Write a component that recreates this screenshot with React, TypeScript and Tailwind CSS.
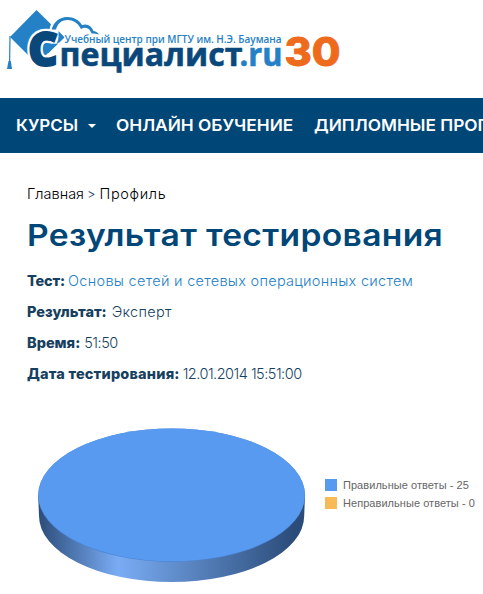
function Logo() {
  return (
    <svg width="350" height="84" viewBox="0 0 350 84" className="block" role="img" aria-label="Специалист.ru">
      <path d="M36.5 10 L10 37 L37 64 L64 37 Z" fill="#2581c6" />
      <path d="M10 36 L9.6 63" stroke="#2581c6" strokeWidth="1.2" fill="none" />
      <path d="M8.5 61 H10.8 L12 69 H7 Z" fill="#2581c6" />
      <path d="M49 32 L50 27 C54 14 73 12 82 23 C89 22 94 28 99 36 L64 37 L60 32 Z" fill="#fff" />
      <path d="M51.5 30.5 C53 22 60 17 67 17 C74 17 79 20 82 25 C88 23 92 27 93.5 31 C96 31.5 98 32.5 99 34.5 C96 33.5 94 33.5 91.5 33.5 C90 28.5 86 26 81 29 C78 23 73 20 67.5 20 C61 20 57.500 24 56 29.500 C54.500 29.200 53 29.500 51.500 30.500 Z" fill="#2581c6" />
      <g fontFamily="'Open Sans', 'Noto Sans', sans-serif" fontWeight="700">
        <text x="28" y="65.5" fontSize="48" fontWeight="800" textLength="30" lengthAdjust="spacingAndGlyphs" fill="#0a487c" stroke="#fff" strokeWidth="6.5" paintOrder="stroke">С</text>
        <path d="M58.500 31 L64.500 37.500 L48 53.500 L43 50 L44 44 L58.500 43.500 Z" fill="#2581c6" />
        <text x="28" y="65.5" fontSize="48" fontWeight="800" textLength="30" lengthAdjust="spacingAndGlyphs" fill="#0a487c" stroke="#0a487c" strokeWidth="1.8">С</text>
        <text x="59.5" y="66" fontSize="33" textLength="183" lengthAdjust="spacingAndGlyphs" fill="#0a487c" stroke="#0a487c" strokeWidth="0.6">пециалист</text>
        <text x="239.5" y="66" fontSize="33" textLength="43" lengthAdjust="spacingAndGlyphs" fill="#2581c6" stroke="#2581c6" strokeWidth="0.6">.ru</text>
        <text x="64.5" y="43" fontSize="11" fontWeight="600" textLength="217" lengthAdjust="spacingAndGlyphs" fill="#2581c6">Учебный центр при МГТУ им. Н.Э. Баумана</text>
      </g>
      <text x="284.5" y="65.5" fontFamily="Inter, sans-serif" fontWeight="800" fontSize="39" textLength="56" lengthAdjust="spacingAndGlyphs" fill="#ee6a1c" stroke="#ee6a1c" strokeWidth="0.8">30</text>
    </svg>
  );
}

function Pie() {
  return (
    <svg width="270" height="156" viewBox="37 427 270 156" className="block shrink-0">
      <defs>
        <linearGradient id="rim" x1="38" x2="305" y1="0" y2="0" gradientUnits="userSpaceOnUse">
          <stop offset="0" stopColor="#2b4c79" />
          <stop offset="0.3" stopColor="#7aacf5" />
          <stop offset="0.5" stopColor="#628fce" />
          <stop offset="0.96" stopColor="#2b4c79" />
          <stop offset="1" stopColor="#2b4c79" />
        </linearGradient>
      </defs>
      <path d="M38.2 495 L39 516 A132.5 66 0 0 0 304.2 516 L305 495 Z" fill="url(#rim)" />
      <ellipse cx="171.6" cy="495.2" rx="133.5" ry="66.7" fill="#4d86d3" />
      <ellipse cx="171.6" cy="494.9" rx="133.2" ry="66.4" fill="#589af0" />
    </svg>
  );
}

export default function App() {
  return (
    <div className="h-[594px] w-[483px] overflow-hidden bg-white font-['Inter','Liberation_Sans',sans-serif] text-[#173f60]">
      <header className="h-[98px]">
        <Logo />
      </header>
      <nav className="flex h-[55px] items-center overflow-hidden bg-[#004677] pb-0.5 pl-4 text-base font-semibold whitespace-nowrap text-white">
        <a className="flex w-[100px] shrink-0 items-center">
          <span className="w-[72px]"><span className="inline-block origin-left scale-x-[1.06]">КУРСЫ</span></span>
          <span className="mt-0.5 border-x-4 border-t-4 border-x-transparent border-t-white" />
        </a>
        <a className="w-[198px] shrink-0"><span className="inline-block origin-left scale-x-[1.08]">ОНЛАЙН ОБУЧЕНИЕ</span></a>
        <a className="shrink-0"><span className="inline-block origin-left scale-x-[1.08]">ДИПЛОМНЫЕ ПРОГРАММЫ</span></a>
      </nav>
      <main className="px-[27px] pt-[31px] text-[14.5px] leading-5 font-light whitespace-nowrap">
        <div className="text-black">
          <a>Главная</a><span className="mr-1 ml-[3px] text-[13px] text-[#173f60]">&gt;</span><a className="tracking-[0.045em]">Профиль</a>
        </div>
        <h1 className="mt-[10px] origin-left scale-x-[1.12] text-[30px] leading-[42px] font-semibold tracking-[0.01em] text-[#004677]">Результат тестирования</h1>
        <div className="mt-[15px] flex flex-col gap-[11px]">
          <p><b className="mr-[3px] font-extrabold tracking-[-0.01em]">Тест:</b><a className="tracking-[0.02em] text-[#2581c6]">Основы сетей и сетевых операционных систем</a></p>
          <p><b className="mr-[5px] font-extrabold">Результат:</b><span className="tracking-[0.02em]">Эксперт</span></p>
          <p><b className="mr-1 font-extrabold">Время:</b><span className="tracking-[-0.035em]">51:50</span></p>
          <p><b className="mr-[3px] font-extrabold tracking-[0.013em]">Дата тестирования:</b><span className="tracking-[-0.035em]">12.01.2014 15:51:00</span></p>
        </div>
      </main>
      <section className="mt-[43px] ml-[37px] flex gap-[18px]">
        <Pie />
        <ul className="mt-[49px] font-['Liberation_Sans',sans-serif] text-[11px] leading-[18px] tracking-[0.05px] whitespace-nowrap text-[#666]">
          <li className="flex items-center gap-1.5"><i className="size-3 bg-[#589af0]" />Правильные ответы - 25</li>
          <li className="flex items-center gap-1.5"><i className="size-3 bg-[#f8b957]" />Неправильные ответы - 0</li>
        </ul>
      </section>
    </div>
  );
}
